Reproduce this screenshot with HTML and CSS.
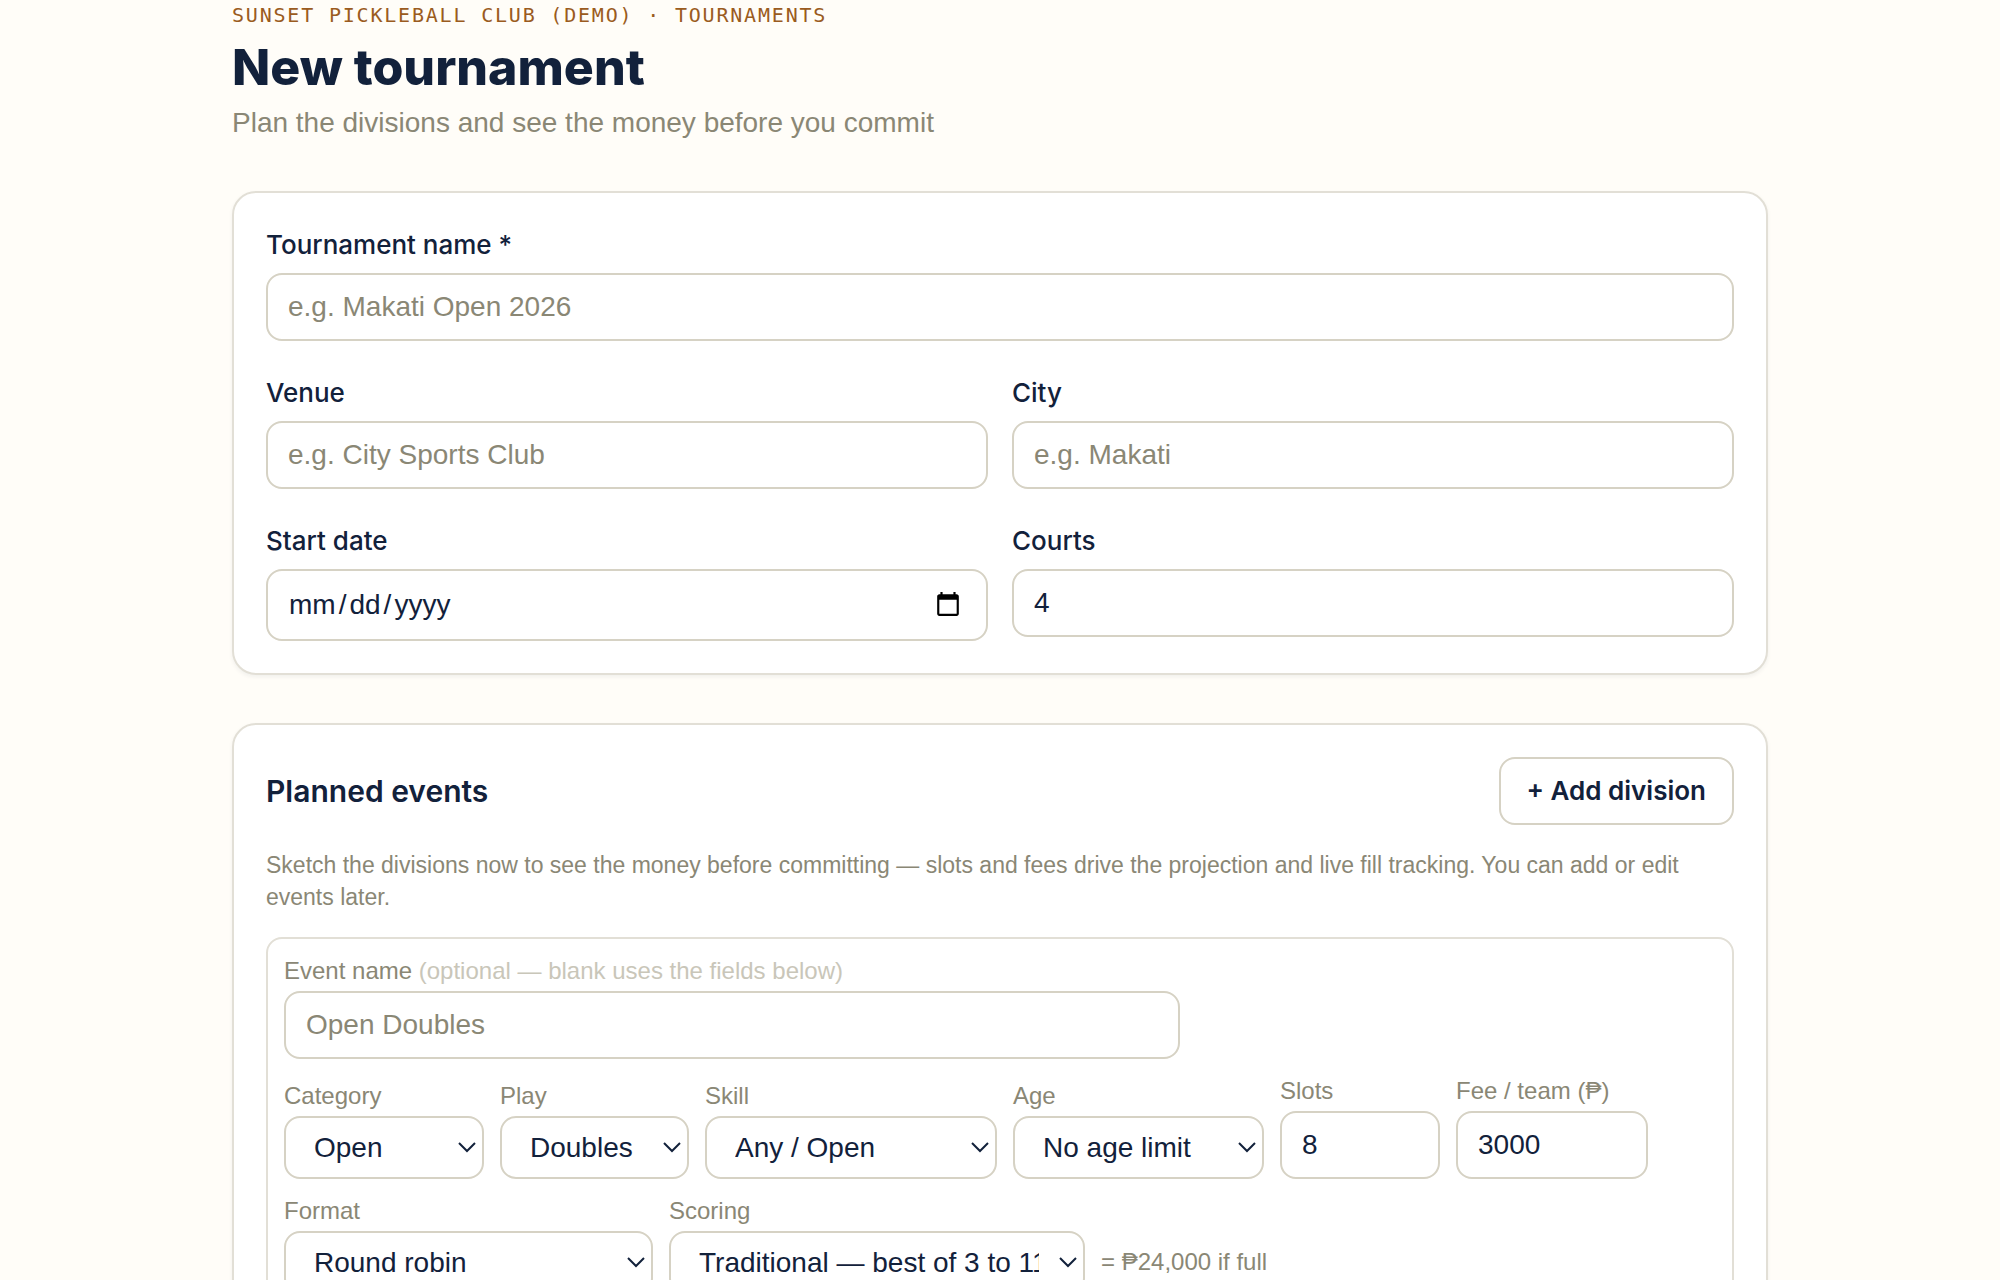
FILE: index.html
```html
<!DOCTYPE html>
<html lang="en">
<head>
<meta charset="utf-8">
<meta name="viewport" content="width=device-width, initial-scale=1">
<title>New tournament</title>
<link rel="stylesheet" href="styles.css">
</head>
<body>
<main class="page">
  <header class="page-header">
    <p class="eyebrow">Sunset Pickleball Club (Demo) · Tournaments</p>
    <h1 class="title">New tournament</h1>
    <p class="subtitle">Plan the divisions and see the money before you commit</p>
  </header>

  <form class="form">
    <section class="card details">
      <div class="field wide">
        <label class="label" for="name">Tournament name *</label>
        <input class="control" id="name" type="text" placeholder="e.g. Makati Open 2026">
      </div>
      <div class="field">
        <label class="label" for="venue">Venue</label>
        <input class="control" id="venue" type="text" placeholder="e.g. City Sports Club">
      </div>
      <div class="field">
        <label class="label" for="city">City</label>
        <input class="control" id="city" type="text" placeholder="e.g. Makati">
      </div>
      <div class="field">
        <label class="label" for="start">Start date</label>
        <input class="control date" id="start" type="date">
      </div>
      <div class="field">
        <label class="label" for="courts">Courts</label>
        <input class="control" id="courts" type="number" value="4">
      </div>
    </section>

    <section class="card events">
      <div class="events-head">
        <h2 class="section-title">Planned events</h2>
        <button class="button" type="button">+ Add division</button>
      </div>
      <p class="hint">Sketch the divisions now to see the money before committing — slots and fees drive the projection and live fill tracking. You can add or edit events later.</p>

      <div class="division">
        <div class="subfield event-name">
          <label class="sublabel" for="event-name">Event name <span class="optional">(optional — blank uses the fields below)</span></label>
          <input class="control" id="event-name" type="text" placeholder="Open Doubles">
        </div>
        <div class="row">
          <div class="subfield w-category">
            <label class="sublabel" for="category">Category</label>
            <select class="control select" id="category"><option>Open</option></select>
          </div>
          <div class="subfield w-play">
            <label class="sublabel" for="play">Play</label>
            <select class="control select" id="play"><option>Doubles</option></select>
          </div>
          <div class="subfield w-skill">
            <label class="sublabel" for="skill">Skill</label>
            <select class="control select" id="skill"><option>Any / Open</option></select>
          </div>
          <div class="subfield w-age">
            <label class="sublabel" for="age">Age</label>
            <select class="control select" id="age"><option>No age limit</option></select>
          </div>
          <div class="subfield w-slots">
            <label class="sublabel" for="slots">Slots</label>
            <input class="control" id="slots" type="number" value="8">
          </div>
          <div class="subfield w-fee">
            <label class="sublabel" for="fee">Fee / team (₱)</label>
            <input class="control" id="fee" type="number" value="3000">
          </div>
        </div>
        <div class="row">
          <div class="subfield w-format">
            <label class="sublabel" for="format">Format</label>
            <select class="control select" id="format"><option>Round robin</option></select>
          </div>
          <div class="subfield w-scoring">
            <label class="sublabel" for="scoring">Scoring</label>
            <select class="control select" id="scoring"><option>Traditional — best of 3 to 11</option></select>
          </div>
          <p class="total">= ₱24,000 if full</p>
        </div>
      </div>
    </section>
  </form>
</main>
</body>
</html>
```
FILE: styles.css
```css
:root {
  --ink: #12213b;
  --muted: #8a8775;
  --faint: #c9c6b9;
  --line: #e2dfd6;
  --control-line: #d6d2c4;
  --accent: #9a5b20;
  --paper: #fffdf8;
  --text: "Liberation Sans", Arial, sans-serif;
  --strong: Inter, "Liberation Sans", sans-serif;
}

*, *::before, *::after { box-sizing: border-box; }

body {
  margin: 0;
  height: 100vh;
  overflow-y: auto;
  scrollbar-width: none;
  background: var(--paper);
  color: var(--ink);
  font: 28px/40px var(--text);
}

h1, h2, p { margin: 0; }

.page {
  max-width: 1600px;
  margin: 0 auto;
  padding: 0 32px 48px;
}

.page-header {
  display: flex;
  flex-direction: column;
  gap: 4px;
  margin-bottom: 48px;
}

.eyebrow {
  font: 20px/31px "DejaVu Sans Mono", monospace;
  letter-spacing: 0.09em;
  text-transform: uppercase;
  color: var(--accent);
}

.title { font: 800 50px/64px var(--strong); }

.subtitle { color: var(--muted); }

.form {
  display: flex;
  flex-direction: column;
  gap: 48px;
}

.card {
  padding: 32px;
  border: 2px solid var(--line);
  border-radius: 24px;
  background: #fff;
  box-shadow: 0 2px 4px rgba(18, 33, 59, 0.06);
}

.details {
  display: grid;
  grid-template-columns: 1fr 1fr;
  align-items: start;
  gap: 32px 24px;
}

.wide { grid-column: 1 / -1; }

.field {
  display: flex;
  flex-direction: column;
  gap: 8px;
}

.label { font: 500 26px/40px var(--strong); }

.control {
  display: block;
  width: 100%;
  height: 68px;
  padding: 0 20px;
  border: 2px solid var(--control-line);
  border-radius: 16px;
  background: #fff;
  color: var(--ink);
  font: 28px/40px var(--text);
}

.control::placeholder { color: var(--muted); opacity: 1; }

.date { height: 72px; }

.date::-webkit-datetime-edit-text { padding: 0 2px; }

.date::-webkit-calendar-picker-indicator {
  width: 28px;
  height: 28px;
  padding: 0;
  margin: 0 4px 0 0;
}

.select {
  height: 63px;
  padding: 0 44px 0 28px;
  appearance: none;
  background: #fff url("data:image/svg+xml,%3Csvg xmlns='http://www.w3.org/2000/svg' width='20' height='12' viewBox='0 0 20 12'%3E%3Cpath d='M2 1l8 8 8-8' fill='none' stroke='%2312213b' stroke-width='2'/%3E%3C/svg%3E") no-repeat right 5px center;
}

.events { display: flex; flex-direction: column; gap: 24px; }

.events-head {
  display: flex;
  align-items: center;
  justify-content: space-between;
}

.section-title { font: 600 30px/44px var(--strong); }

.button {
  height: 68px;
  padding: 0 26px;
  border: 2px solid var(--control-line);
  border-radius: 16px;
  background: #fff;
  color: var(--ink);
  font: 600 26px/40px var(--strong);
}

.hint {
  color: var(--muted);
  font-size: 23px;
  line-height: 32px;
}

.division {
  display: flex;
  flex-direction: column;
  gap: 16px;
  padding: 16px;
  border: 2px solid var(--line);
  border-radius: 16px;
}

.row {
  display: flex;
  flex-wrap: wrap;
  align-items: flex-end;
  gap: 16px;
}

.subfield {
  display: flex;
  flex-direction: column;
  gap: 4px;
}

.sublabel, .total {
  color: var(--muted);
  font-size: 24px;
  line-height: 32px;
}

.optional { color: var(--faint); }

.event-name { max-width: 896px; }
.w-category { width: 200px; }
.w-play { width: 189px; }
.w-skill { width: 292px; }
.w-age { width: 251px; }
.w-slots { width: 160px; }
.w-fee { width: 192px; }
.w-format { width: 369px; }
.w-scoring { width: 416px; }

.total { padding-bottom: 16px; }
```
